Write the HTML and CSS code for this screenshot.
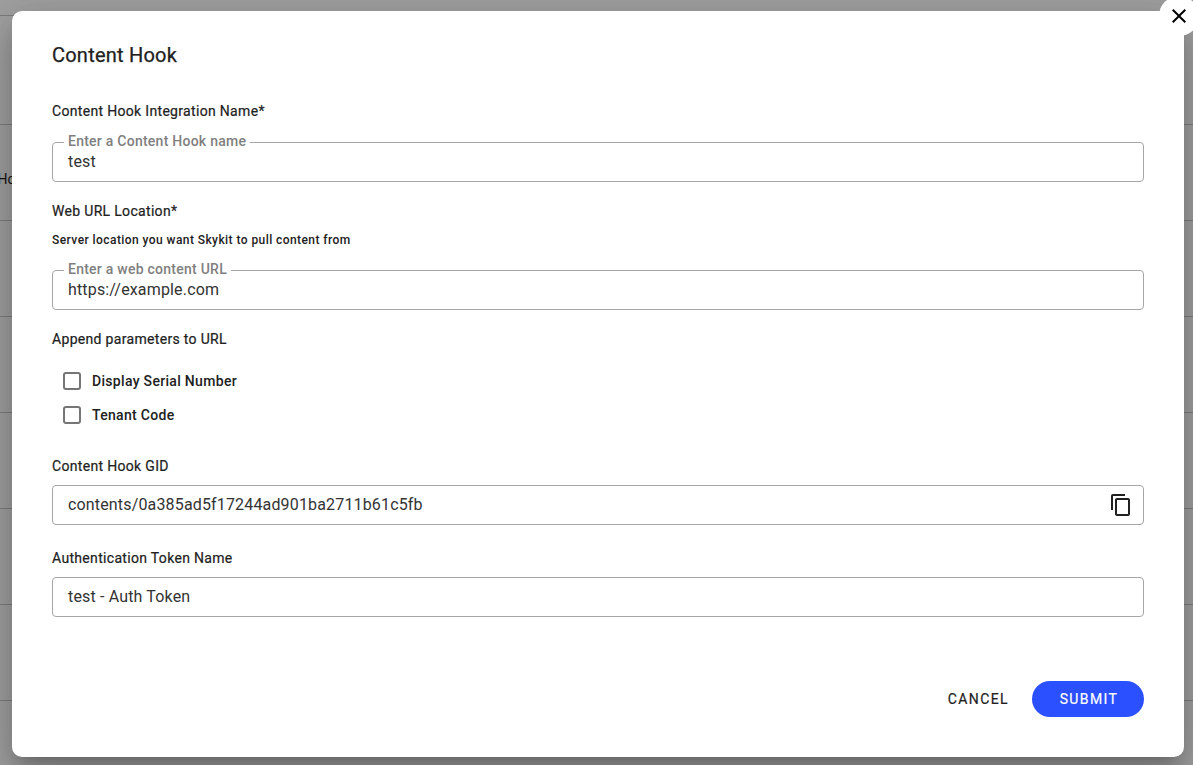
FILE: index.html
```html
<!DOCTYPE html>
<html lang="en">
<head>
  <meta charset="UTF-8">
  <meta name="viewport" content="width=device-width, initial-scale=1.0">
  <title>Content Hook</title>
  <link rel="stylesheet" href="styles.css">
</head>
<body>
  <!-- table behind the dialog -->
  <div class="backdrop">
    <div class="row row-top"></div>
    <div class="row row-head"></div>
    <div class="row row-name"><span class="row-text">Content Hook</span></div>
    <div class="row"></div>
    <div class="row"></div>
    <div class="row"></div>
    <div class="row"></div>
    <div class="row"></div>
  </div>

  <div class="modal">
    <button type="button" class="close" aria-label="Close">
      <svg width="24" height="24" viewBox="0 0 24 24"><path d="M19 6.41 17.59 5 12 10.59 6.41 5 5 6.41 10.59 12 5 17.59 6.41 19 12 13.41 17.59 19 19 17.59 13.41 12z"/></svg>
    </button>

    <h2 class="title">Content Hook</h2>

    <p class="label label-first">Content Hook Integration Name*</p>
    <div class="field">
      <span class="field-label">Enter a Content Hook name</span>
      <span class="value">test</span>
    </div>

    <p class="label label-url">Web URL Location*</p>
    <p class="hint">Server location you want Skykit to pull content from</p>
    <div class="field">
      <span class="field-label">Enter a web content URL</span>
      <span class="value">https://example.com</span>
    </div>

    <p class="label label-params">Append parameters to URL</p>
    <div class="checks">
      <label class="check"><span class="box"></span>Display Serial Number</label>
      <label class="check"><span class="box"></span>Tenant Code</label>
    </div>

    <p class="label label-gid">Content Hook GID</p>
    <div class="field">
      <span class="value">contents/0a385ad5f17244ad901ba2711b61c5fb</span>
      <svg class="copy" width="24" height="24" viewBox="0 0 24 24"><path d="M16 1H4c-1.100 0-2 .9-2 2v14h2V3h12V1zm3 4H8c-1.100 0-2 .9-2 2v14c0 1.100.9 2 2 2h11c1.100 0 2-.9 2-2V7c0-1.100-.9-2-2-2zm0 16H8V7h11v14z"/></svg>
    </div>

    <p class="label label-token">Authentication Token Name</p>
    <div class="field">
      <span class="value">test - Auth Token</span>
    </div>

    <div class="actions">
      <button type="button" class="btn btn-cancel">Cancel</button>
      <button type="button" class="btn btn-submit">Submit</button>
    </div>
  </div>
</body>
</html>
```

FILE: styles.css
```css
* {
  box-sizing: border-box;
}

html, body {
  height: 100%;
}

body {
  margin: 0;
  overflow: hidden;
  background-color: #a0a0a0;
  font-family: Roboto, "Liberation Sans", sans-serif;
  color: #212121;
}

.backdrop {
  height: 765px;
  overflow: hidden;
}

.row {
  height: 96px;
  border-bottom: 1px solid #7c7c7c;
  display: flex;
  align-items: center;
}

.row-top {
  height: 16px;
}

.row-head {
  height: 109px;
}

.row-name {
  padding-top: 12px;
}

.row-text {
  margin-left: -55px;
  font-size: 14px;
  white-space: nowrap;
  color: #141414;
}

.modal {
  position: absolute;
  top: 11px;
  left: 12px;
  width: 1172px;
  height: 746px;
  padding: 32px 40px 40px;
  background-color: #fff;
  border-radius: 10px;
  box-shadow: 0 11px 15px -7px rgba(0, 0, 0, 0.2), 0 24px 38px 3px rgba(0, 0, 0, 0.14), 0 9px 46px 8px rgba(0, 0, 0, 0.12);
}

.close {
  position: absolute;
  top: -15px;
  right: -15px;
  width: 40px;
  height: 40px;
  padding: 0;
  border: none;
  border-radius: 50%;
  background-color: #fff;
  display: flex;
  align-items: center;
  justify-content: center;
}

.title {
  margin: 0;
  font-size: 20px;
  line-height: 24px;
  font-weight: 400;
  letter-spacing: 0.22px;
  -webkit-text-stroke: 0.25px #212121;
}

.label {
  margin: 0;
  font-size: 14px;
  line-height: 20px;
  font-weight: 400;
  letter-spacing: 0.32px;
  -webkit-text-stroke: 0.2px #212121;
}

.label-first {
  margin-top: 34px;
  margin-bottom: 21px;
}

.label-url {
  margin-top: 19px;
}

.hint {
  margin: 12px 0 23px;
  font-size: 12px;
  line-height: 14px;
  font-weight: 500;
  letter-spacing: 0.43px;
}

.label-params {
  margin-top: 19px;
  margin-bottom: 20px;
}

.checks {
  display: flex;
  flex-direction: column;
  gap: 10px;
  padding-left: 11px;
}

.check {
  display: flex;
  align-items: center;
  height: 24px;
  font-size: 14px;
  font-weight: 500;
  letter-spacing: 0.31px;
}

.box {
  width: 18px;
  height: 18px;
  margin-right: 11px;
  border: 2px solid #757575;
  border-radius: 3px;
}

.label-gid {
  margin-top: 29px;
  margin-bottom: 9px;
}

.label-token {
  margin-top: 23px;
  margin-bottom: 9px;
}

.field {
  position: relative;
  display: flex;
  align-items: center;
  justify-content: space-between;
  height: 40px;
  padding: 0 15px 2px;
  border: 1px solid #a6a6a6;
  border-radius: 4px;
}

.field-label {
  position: absolute;
  top: -9px;
  left: 11px;
  padding: 0 4px;
  background-color: #fff;
  font-size: 14px;
  line-height: 14px;
  font-weight: 500;
  color: #7f7f7f;
  letter-spacing: 0.25px;
}

.value {
  font-size: 16px;
  letter-spacing: 0.16px;
  color: #333;
}

.copy {
  margin-right: -5px;
  margin-top: 2px;
  fill: #212121;
}

.actions {
  display: flex;
  justify-content: flex-end;
  align-items: center;
  gap: 24px;
  margin-top: 64px;
}

.btn {
  height: 36px;
  border: none;
  font-family: inherit;
  font-size: 14px;
  font-weight: 400;
  letter-spacing: 1.4px;
  text-transform: uppercase;
  -webkit-text-stroke: 0.2px currentColor;
}

.btn-cancel {
  padding: 0;
  margin-right: -1px;
  background: none;
  color: #212121;
}

.btn-submit {
  width: 112px;
  padding-left: 8px;
  border-radius: 18px;
  background-color: #2b50ff;
  color: #fff;
}
```
